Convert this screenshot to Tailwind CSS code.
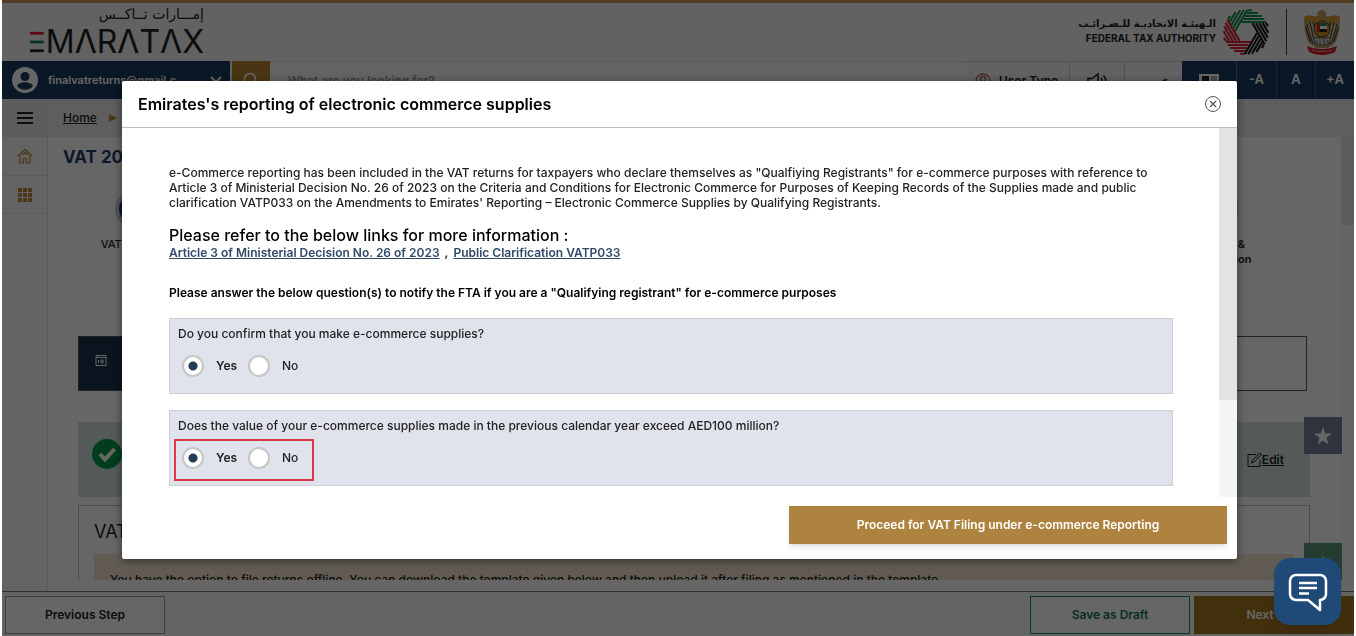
<!DOCTYPE html>
<html lang="en">
<head>
    <meta charset="UTF-8">
    <meta name="viewport" content="width=device-width, initial-scale=1.0">
    <title>EmaraTax</title>
    <script src="https://cdn.jsdelivr.net/npm/@tailwindcss/browser@4"></script>
</head>
<body class="bg-white px-0.5 font-['Inter',sans-serif] text-xs text-[#222222]">

    <div class="relative flex h-screen flex-col overflow-hidden bg-white">

        <!-- Header -->
        <div class="h-[3px] shrink-0 bg-[#d8955a]"></div>
        <header class="flex h-[58px] shrink-0 items-center justify-between bg-[#f4f4f4] pl-[27px] pr-[14px]">
            <div class="flex w-[175px] flex-col">
                <span lang="ar" dir="rtl" class="font-['DejaVu_Sans',sans-serif] text-sm leading-5">إمـــارات تــاكــس</span>
                <div class="flex items-center gap-0.5">
                    <svg class="h-[22px] w-4" viewBox="0 0 16 22" role="img" aria-label="E">
                        <path d="M1 1.500h15" stroke="#e0202c" stroke-width="3"/>
                        <path d="M1 11h15" stroke="#0b8a4c" stroke-width="3"/>
                        <path d="M1 20.500h15" stroke="#222" stroke-width="3"/>
                    </svg>
                    <span class="text-[32px] leading-9">MΛRΛTΛX</span>
                </div>
            </div>
            <div class="flex items-center">
                <div class="mr-[7px] flex flex-col items-end">
                    <span lang="ar" dir="rtl" class="font-['DejaVu_Sans',sans-serif] text-[10px] font-bold leading-3">الـهيئـة الاتحاديـة للـضـرائـب</span>
                    <span class="text-[10px] font-bold leading-4">FEDERAL TAX AUTHORITY</span>
                </div>
                <svg class="h-[46px] w-[46px]" viewBox="-23 -23 46 46" fill="none" stroke-width="2.100">
                    <defs>
                        <path id="blade" d="M-4.600-10H20M-2.600-13H18.300M-1.200-16H15.800M.5-19H12M2-21.800H6"/>
                    </defs>
                    <use href="#blade" stroke="#129350"/>
                    <use href="#blade" stroke="#129350" transform="rotate(-60)"/>
                    <use href="#blade" stroke="#151515" transform="rotate(60)"/>
                    <use href="#blade" stroke="#151515" transform="rotate(120)"/>
                    <use href="#blade" stroke="#d8202f" transform="rotate(180)"/>
                    <use href="#blade" stroke="#d8202f" transform="rotate(240)"/>
                </svg>
                <div class="mx-[17px] h-[46px] w-px bg-[#444]"></div>
                <svg class="h-[46px] w-9" viewBox="0 0 36 46">
                    <path d="M18 1c-2 0-4 1-4 3l-2 1.500 3 1C11 9 5 4 0 8c0 9 1 19 5 26l7 5h12l7-5c4-7 5-17 5-26-5-4-10 1-14-1V5c0-2-2-4-4-4z" fill="#c4a05a"/>
                    <path d="M1 8c5-3 8-1 12 2l-1 4C9 11 5 10 1 13zM35 8c-5-3-8-1-12 2l1 4c3-3 7-4 11-1z" fill="#d79a2c"/>
                    <path d="M3 15l6 20M6 13l5 22M9 13l3 10M33 15l-6 20M30 13l-5 22M27 13l-3 10M1.500 18l5 15M34.500 18l-5 15" stroke="#4a4a4a" stroke-width="1.200"/>
                    <path d="M4.500 16l5 17M7.500 14l4 16M31.500 16l-5 17M28.500 14l-4 16" stroke="#e8e4d8"/>
                    <circle cx="18" cy="20" r="8" fill="#c98f2c" stroke="#4a3a1c"/>
                    <path d="M14 14h9v3h-9z" fill="#1d8a4a"/>
                    <path d="M14 17h9v3h-9z" fill="#fff"/>
                    <path d="M14 20h9v3h-9z" fill="#222"/>
                    <path d="M13 14h3v9h-3z" fill="#d8202f"/>
                    <path d="M9 29h18l-3 7H12z" fill="#ddd" stroke="#555"/>
                    <path d="M12 31l2 4M16 30v6M20 30v6M24 31l-2 4" stroke="#555"/>
                    <path d="M3 37c9 4 21 4 30 0l-2 6c-8 4-18 4-26 0z" fill="#d8202f"/>
                    <path d="M8 41c6 2 14 2 20 0" stroke="#f0a0a0" fill="none"/>
                </svg>
            </div>
        </header>

        <!-- Toolbar -->
        <div class="flex h-[38px] shrink-0 bg-[#f4f4f4] font-semibold">
            <button class="flex w-[228px] items-center gap-2.5 bg-[#1b3b62] pl-2.5 pr-2 text-white">
                <svg class="h-[26px] w-[26px] shrink-0" viewBox="0 0 26 26">
                    <circle cx="13" cy="13" r="13" fill="#fff"/>
                    <circle cx="13" cy="9.500" r="4.500" fill="#1b3b62"/>
                    <path d="M5 19c2-5 14-5 16 0-4 5-12 5-16 0z" fill="#1b3b62"/>
                </svg>
                <span class="grow text-left text-[11px]">finalvatreturns@gmail.c...</span>
                <svg class="h-3 w-3" viewBox="0 0 12 12" fill="none" stroke="#fff" stroke-width="2"><path d="M1 3l5 5 5-5"/></svg>
            </button>
            <button aria-label="Search" class="ml-0.5 flex w-[38px] items-center justify-center bg-[#b8862f]">
                <svg class="h-4 w-4" viewBox="0 0 16 16" fill="none" stroke="#fff" stroke-width="1.500"><circle cx="7" cy="7" r="5.500"/><path d="M11 11l4 4"/></svg>
            </button>
            <input type="text" aria-label="Search" placeholder="What are you looking for?" class="min-w-0 grow border-t border-[#ddd] bg-[#f8f8f8] pl-[18px] font-medium placeholder:text-[#888]">
            <button class="flex w-[106px] items-center justify-center gap-2 border-r border-t border-[#ccc]">
                <svg class="h-4 w-4" viewBox="0 0 16 16" fill="none" stroke="#b06a50" stroke-width="1.500"><circle cx="8" cy="8" r="7"/><circle cx="8" cy="6" r="2.500"/><path d="M3 13c2-4 8-4 10 0"/></svg>
                User Type
            </button>
            <button aria-label="Read aloud" class="flex w-[55px] items-center justify-center border-r border-t border-[#ccc]">
                <svg class="h-[18px] w-5" viewBox="0 0 20 18" fill="none" stroke="#222" stroke-width="1.500"><path d="M1 6.500h4l6-4.500v14l-6-4.500H1zM14 6c1.500 2 1.500 4 0 6M16.500 3.500c3 3 3 8 0 11"/></svg>
            </button>
            <button lang="ar" class="w-[57px] border-t border-[#ccc] font-['DejaVu_Sans',sans-serif]">عربي</button>
            <button aria-label="Contrast" class="flex w-[55px] items-center justify-center border-r border-[#54708f] bg-[#1b3b62]">
                <svg class="h-3 w-5" viewBox="0 0 20 12"><path d="M0 0h20v12H0z" fill="#fff"/><path d="M3 2h7v8H3z" fill="#222"/><path d="M12 2h6v8h-6z" fill="#bbb"/></svg>
            </button>
            <button class="w-10 border-r border-[#3a5a80] bg-[#1b3b62] text-[13px] text-white">-A</button>
            <button class="w-[39px] border-r border-[#3a5a80] bg-[#1b3b62] text-[13px] text-white">A</button>
            <button class="w-[38px] bg-[#1b3b62] text-[13px] text-white">+A</button>
        </div>

        <div class="flex min-h-0 grow">
            <!-- Sidebar -->
            <aside class="w-[46px] shrink-0 border-r border-[#e2e2e2] bg-[#fafafa]">
                <button aria-label="Menu" class="flex h-[38px] w-full items-center justify-center bg-[#e8e8e8]">
                    <svg class="h-3 w-4" viewBox="0 0 16 12" stroke="#222" stroke-width="2"><path d="M0 1h16M0 6h16M0 11h16"/></svg>
                </button>
                <a href="#" aria-label="Home" class="flex h-[39px] items-center justify-center border-b border-[#e8e8e8]">
                    <svg class="h-4 w-4" viewBox="0 0 16 16" fill="none" stroke="#b68a35" stroke-width="1.200"><path d="M1 8l7-6.500L15 8M3 7.500V15h3.500v-4.500h3V15H13V7.500M5 7l3-2.500L11 7"/></svg>
                </a>
                <a href="#" aria-label="Services" class="flex h-[38px] items-center justify-center border-b border-[#e8e8e8]">
                    <svg class="h-3.5 w-3.5" viewBox="0 0 14 14" fill="#b68a35"><path d="M0 0h4v4H0zM5 0h4v4H5zM10 0h4v4h-4zM0 5h4v4H0zM5 5h4v4H5zM10 5h4v4h-4zM0 10h4v4H0zM5 10h4v4H5zM10 10h4v4h-4z"/></svg>
                </a>
            </aside>

            <main class="flex min-w-0 grow flex-col">
                <nav class="flex h-[38px] shrink-0 items-center gap-3 bg-[#eaeaea] pl-[15px] font-medium">
                    <a href="#" class="underline">Home</a>
                    <svg class="h-2 w-2" viewBox="0 0 8 8" fill="#b68a35"><path d="M0 0l8 4-8 4z"/></svg>
                </nav>
                <div class="flex h-[443px] shrink-0">
                    <div class="min-w-0 grow overflow-hidden pl-[15px]">
                        <h1 class="mt-2 text-[17px] font-bold leading-6 text-[#1d3c66]">VAT 201</h1>
                        <!-- Steps -->
                        <div class="flex justify-between pl-[30px] pr-[80px] pt-[22px] text-center text-[11px] font-medium leading-[15px]">
                            <div class="flex w-20 flex-col items-center">
                                <span class="mb-2.5 h-9 w-9 rounded-full border-4 border-[#c9cfe0] bg-[#1d3c66]"></span>
                                VAT Returns
                            </div>
                            <div class="flex w-20 flex-col items-center font-semibold">
                                <span class="mb-2.5 h-9 w-9 rounded-full border-4 border-[#d9dcf0] bg-white"></span>
                                Review &amp;<br>Declaration
                            </div>
                        </div>
                        <div class="ml-[15px] mr-[34px] mt-[69px] flex h-[55px] border border-[#555]">
                            <div class="flex w-1/4 items-center bg-[#18324f] pl-4 pb-2">
                                <svg class="h-3 w-3" viewBox="0 0 12 12" fill="none" stroke="#fff"><path d="M1 1.500h10v10H1zM1 3.500h10M3.500 6v3M6 6h2v3H6z"/></svg>
                                <span class="ml-4 text-white">Period</span>
                            </div>
                        </div>
                        <div class="ml-[15px] mr-[31px] mt-[31px] flex h-[75px] items-center justify-between bg-[#d3e2da] pl-3.5 pr-[26px]">
                            <svg class="mb-3 h-[30px] w-[30px]" viewBox="0 0 30 30"><circle cx="15" cy="15" r="15" fill="#009a4e"/><path d="M8 15l5 5.500L22.500 10" fill="none" stroke="#fff" stroke-width="4"/></svg>
                            <a href="#" class="flex items-end text-xs font-semibold underline">
                                <svg class="h-4 w-[15px]" viewBox="0 0 15 16" fill="none" stroke="#222"><path d="M9 2.500H1v12h12V8M4.500 11l1-3L13 1l1.500 1.500L7 10z"/></svg>
                                Edit
                            </a>
                        </div>
                        <div class="ml-[15px] mr-[31px] mt-2 border border-[#bbb] px-[15px] pt-3">
                            <h2 class="mb-2 text-lg leading-7">VAT Return</h2>
                            <div class="h-20 bg-[#f3e4d2] px-4 pt-[18px] font-medium">You have the option to file returns offline. You can download the template given below and then upload it after filing as mentioned in the template.</div>
                        </div>
                    </div>
                    <div class="w-[13px] shrink-0 bg-[#fafafa]"><div class="h-[88px] bg-[#e6e6e6]"></div></div>
                </div>
            </main>
        </div>

        <!-- Footer actions -->
        <footer class="absolute inset-x-0 bottom-0 flex h-[45px] items-end border-t border-[#777] bg-[#fafafa] pb-0.5 pl-[3px] font-semibold">
            <button class="h-[38px] w-[160px] border border-[#999] bg-white">Previous Step</button>
            <button class="ml-auto h-[38px] w-[160px] border border-[#0b8a5c] bg-white text-[#0b7a4c]">Save as Draft</button>
            <button class="ml-1 h-[38px] w-[160px] bg-[#a6761f] pr-7 text-white">Next</button>
        </footer>

        <!-- Floating shortcuts -->
        <button aria-label="Favourites" class="absolute right-3 top-[417px] flex h-[37px] w-[38px] items-center justify-center bg-[#77809a]">
            <svg class="h-[18px] w-[18px]" viewBox="0 0 18 18" fill="#fff"><path d="M9 0l2.200 6.500H18l-5.500 4.200 2 6.800L9 13.400l-5.500 4.100 2-6.800L0 6.500h6.800z"/></svg>
        </button>
        <button aria-label="Back to top" class="absolute right-3 top-[543px] flex h-[37px] w-[38px] items-center justify-center bg-[#5a9a78]">
            <svg class="h-3 w-3" viewBox="0 0 12 12" fill="none" stroke="#fff" stroke-width="2"><path d="M1 8l5-6 5 6"/></svg>
        </button>
    </div>

    <!-- Overlay -->
    <div class="fixed inset-x-0.5 inset-y-0 bg-black/60"></div>

    <!-- E-commerce modal -->
    <div class="fixed inset-x-0 top-[81px] pl-[122px] pr-[119px]">
        <div role="dialog" aria-labelledby="modal-title" class="rounded-xs bg-white shadow-[0_2px_10px_rgba(0,0,0,0.5)]">
            <div class="flex h-[47px] items-center justify-between border-b border-[#bbb] px-4">
                <h2 id="modal-title" class="text-base font-semibold text-black">Emirates's reporting of electronic commerce supplies</h2>
                <button aria-label="Close">
                    <svg class="h-4 w-4" viewBox="0 0 16 16" fill="none" stroke="#555"><circle cx="8" cy="8" r="7.500"/><path d="M5 5l6 6M11 5l-6 6" stroke-width="1.300"/></svg>
                </button>
            </div>
            <div class="flex h-[369px]">
                <div class="min-w-0 grow overflow-hidden pl-[47px] pr-[46px] pt-[37px]">
                    <p class="text-xs font-medium leading-[15px]">e-Commerce reporting has been included in the VAT returns for taxpayers who declare themselves as "Qualfiying Registrants" for e-commerce purposes with reference to<br>Article 3 of Ministerial Decision No. 26 of 2023 on the Criteria and Conditions for Electronic Commerce for Purposes of Keeping Records of the Supplies made and public<br>clarification VATP033 on the Amendments to Emirates' Reporting – Electronic Commerce Supplies by Qualifying Registrants.</p>
                    <p class="mt-4 text-base font-medium leading-[19px] text-black">Please refer to the below links for more information :</p>
                    <p class="text-xs font-semibold leading-[15px]">
                        <a href="#" class="text-[#2f4a68] underline">Article 3 of Ministerial Decision No. 26 of 2023</a>
                        <span class="mx-0.5">,</span>
                        <a href="#" class="text-[#2f4a68] underline">Public Clarification VATP033</a>
                    </p>
                    <p class="mt-[25px] text-xs font-semibold leading-[15px] text-black">Please answer the below question(s) to notify the FTA if you are a "Qualifying registrant" for e-commerce purposes</p>

                    <fieldset class="mt-[18px] h-[76px] border border-[#cccfd6] bg-[#e0e3ec] px-1 pt-[7px]">
                        <legend class="float-left w-full pl-1 text-xs font-medium leading-[15px]">Do you confirm that you make e-commerce supplies?</legend>
                        <div class="clear-both flex h-12 items-end">
                            <div class="flex h-[42px] w-[140px] items-center border-2 border-transparent pb-1 pl-1.5">
                                <input type="radio" id="q1-yes" name="q1" checked class="h-[22px] w-[22px] appearance-none rounded-full border-2 border-[#c6c6c6] bg-white checked:bg-[radial-gradient(circle,#243c5a_4px,#fff_5px)]">
                                <label for="q1-yes" class="ml-3 w-8 font-semibold">Yes</label>
                                <input type="radio" id="q1-no" name="q1" class="h-[22px] w-[22px] appearance-none rounded-full border-2 border-[#c6c6c6] bg-white checked:bg-[radial-gradient(circle,#243c5a_4px,#fff_5px)]">
                                <label for="q1-no" class="ml-3 font-medium">No</label>
                            </div>
                        </div>
                    </fieldset>

                    <fieldset class="mt-4 h-[76px] border border-[#cccfd6] bg-[#e0e3ec] px-1 pt-[7px]">
                        <legend class="float-left w-full pl-1 text-xs font-medium leading-[15px]">Does the value of your e-commerce supplies made in the previous calendar year exceed AED100 million?</legend>
                        <div class="clear-both flex h-12 items-end">
                            <div class="flex h-[42px] w-[140px] items-center border-2 border-[#d93a4a] pb-1 pl-1.5">
                                <input type="radio" id="q2-yes" name="q2" checked class="h-[22px] w-[22px] appearance-none rounded-full border-2 border-[#c6c6c6] bg-white checked:bg-[radial-gradient(circle,#243c5a_4px,#fff_5px)]">
                                <label for="q2-yes" class="ml-3 w-8 font-semibold">Yes</label>
                                <input type="radio" id="q2-no" name="q2" class="h-[22px] w-[22px] appearance-none rounded-full border-2 border-[#c6c6c6] bg-white checked:bg-[radial-gradient(circle,#243c5a_4px,#fff_5px)]">
                                <label for="q2-no" class="ml-3 font-medium">No</label>
                            </div>
                        </div>
                    </fieldset>
                </div>
                <div class="w-[18px] shrink-0 bg-[#f5f5f5]"><div class="h-[272px] bg-[#e3e3e3]"></div></div>
            </div>
            <div class="flex justify-end pb-[15px] pl-4 pr-2.5 pt-[9px]">
                <button class="h-[38px] w-[438px] bg-[#ad833f] font-semibold text-white shadow-md">Proceed for VAT Filing under e-commerce Reporting</button>
            </div>
        </div>
    </div>

    <!-- Chat -->
    <button aria-label="Chat" class="fixed bottom-[11px] right-[15px] flex h-[67px] w-[67px] items-center justify-center rounded-2xl bg-[#1f4a78] shadow-lg">
        <svg class="h-10 w-10" viewBox="0 0 40 40" fill="none" stroke="#fff" stroke-width="2.500" stroke-linejoin="round"><path d="M8 3h24a6 6 0 0 1 6 6v13a6 6 0 0 1-6 6v10L20 28H8a6 6 0 0 1-6-6V9a6 6 0 0 1 6-6z"/><path d="M11 11h18M11 16h18M11 21.500h10"/></svg>
    </button>

</body>
</html>
